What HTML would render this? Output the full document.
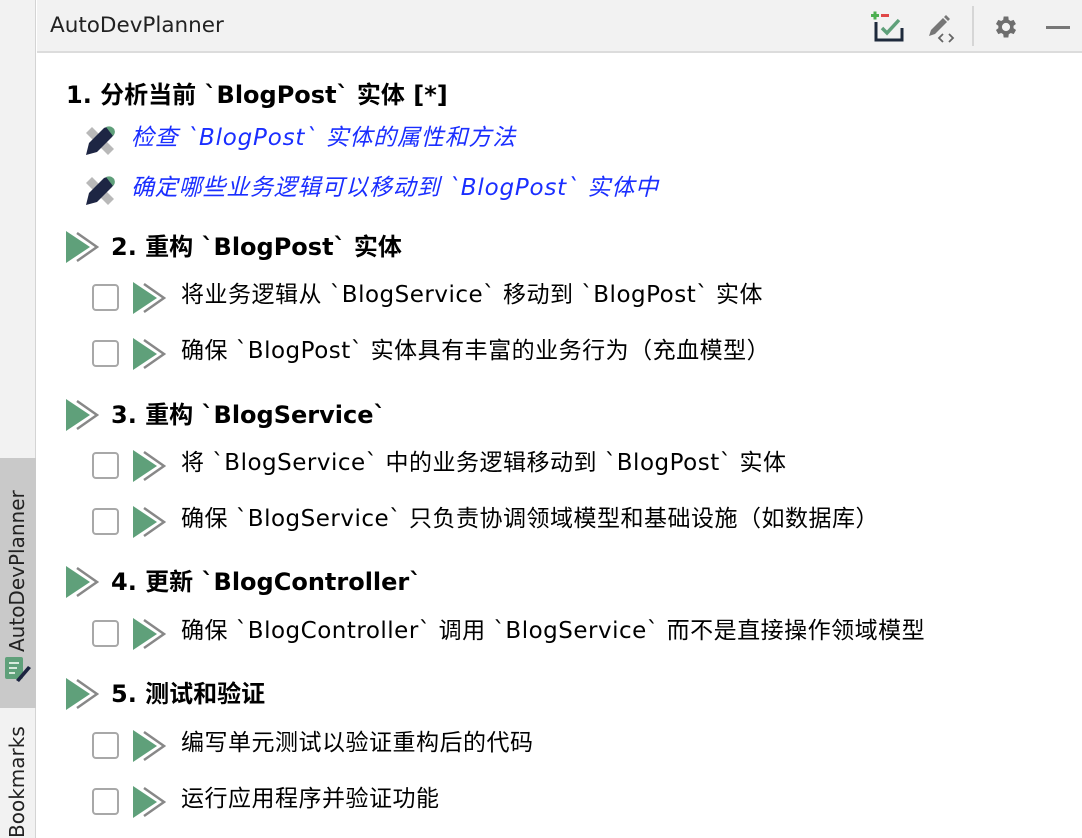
<!DOCTYPE html>
<html><head><meta charset="utf-8"><style>
*{margin:0;padding:0;box-sizing:border-box}
body{width:1082px;height:838px;overflow:hidden;background:#fff;font-family:"DejaVu Sans","Noto Sans CJK SC",sans-serif;position:relative;color:#000}
.side{position:absolute;left:0;top:0;width:36px;height:838px;background:#f2f2f2;border-right:1px solid #d4d4d4}
.tab{position:absolute;left:0;top:458px;width:36px;height:250px;background:#c9c9c9}
.vt{position:absolute;transform:rotate(-90deg);transform-origin:left top;font-size:20px;color:#222;white-space:nowrap}
.hdr{position:absolute;left:37px;top:0;right:0;height:53px;background:#f2f2f2;border-bottom:2px solid #dcdcdc}
.title{position:absolute;left:50px;top:13px;font-size:21.5px;color:#222}
.r{position:absolute;white-space:nowrap;line-height:30px}
.h{font-weight:bold;font-size:24px}
.it{font-size:23px;letter-spacing:0.5px}
.bl{font-style:italic;color:#1a2eff;font-size:23px;letter-spacing:0.8px}
.cb{position:absolute;width:27px;height:27px;border:2px solid #a8a8a8;border-radius:4px;background:#fff}
svg{position:absolute}
</style></head><body>
<div class="side"></div>
<div class="tab"></div>
<div class="vt" style="left:5px;top:652px">AutoDevPlanner</div>
<svg style="left:4px;top:656px" width="28" height="28" viewBox="0 0 28 28"><rect x="1" y="1" width="18" height="22" rx="2" fill="#5fa07a"/><rect x="5" y="6" width="10" height="2" fill="#d7eadc"/><rect x="5" y="11" width="8" height="2" fill="#d7eadc"/><rect x="5" y="16" width="6" height="2" fill="#d7eadc"/><path d="M12 24 L24 10 L27 12 L15 26 Z" fill="#1c2440"/></svg>
<div class="vt" style="left:5px;top:838px">Bookmarks</div>
<div class="hdr"></div>
<div class="title">AutoDevPlanner</div>
<svg style="left:869px;top:10px" width="36" height="34" viewBox="0 0 36 34"><rect x="2" y="4" width="8" height="3" fill="#4caf50"/><rect x="4.5" y="1.5" width="3" height="8" fill="#4caf50"/><rect x="12" y="4" width="8" height="3" fill="#e04848"/><path d="M7 12 V30 H33 V18" stroke="#1e2a3c" stroke-width="3" fill="none"/><path d="M13 18 L18 23 L30 10" stroke="#5fa07a" stroke-width="3.5" fill="none"/></svg>
<svg style="left:925px;top:12px" width="34" height="32" viewBox="0 0 34 32"><path d="M4 24 L6 18 L18 6 L22 10 L10 22 Z" fill="#777"/><path d="M19 5 L21 3 L25 7 L23 9Z" fill="#777"/><path d="M18 22 L14 26 L18 30 M24 22 L28 26 L24 30" stroke="#666" stroke-width="1.8" fill="none"/></svg>
<div style="position:absolute;left:972px;top:6px;width:2px;height:40px;background:#d6d6d6"></div>
<svg style="left:992px;top:13px" width="28" height="28" viewBox="0 0 24 24"><path fill="#6e6e6e" d="M19.4 13a7.5 7.5 0 000-2l2.1-1.6-2-3.5-2.5 1a7.4 7.4 0 00-1.7-1L15 3h-4l-.4 2.9a7.4 7.4 0 00-1.7 1l-2.5-1-2 3.5L6.5 11a7.5 7.5 0 000 2l-2.1 1.6 2 3.5 2.5-1a7.4 7.4 0 001.7 1L11 21h4l.4-2.9a7.4 7.4 0 001.7-1l2.5 1 2-3.5zM13 15.5a3.5 3.5 0 110-7 3.5 3.5 0 010 7z" transform="translate(-1 0)"/></svg>
<div style="position:absolute;left:1046px;top:26px;width:24px;height:3px;background:#777"></div>

<div class="r h" style="left:66px;top:80px">1. 分析当前 `BlogPost` 实体 [*]</div>

<svg style="left:84px;top:123px" width="34" height="34" viewBox="0 0 34 34"><path d="M2 10 L8 4 L30 26 L24 32 Z" fill="#b9b9b9"/><path d="M2 32 L5 20 L20 5 Q26 2 30 6 Q32 10 28 14 L13 29 Z" fill="#1e2644"/><path d="M22 4 Q27 2 30 6 Q32 10 29 13 Z" fill="#5fa07a"/></svg>
<div class="r bl" style="left:131px;top:123px">检查 `BlogPost` 实体的属性和方法</div>
<svg style="left:84px;top:173px" width="34" height="34" viewBox="0 0 34 34"><path d="M2 10 L8 4 L30 26 L24 32 Z" fill="#b9b9b9"/><path d="M2 32 L5 20 L20 5 Q26 2 30 6 Q32 10 28 14 L13 29 Z" fill="#1e2644"/><path d="M22 4 Q27 2 30 6 Q32 10 29 13 Z" fill="#5fa07a"/></svg>
<div class="r bl" style="left:131px;top:173px">确定哪些业务逻辑可以移动到 `BlogPost` 实体中</div>

<svg style="display:none"><defs><g id="ar"><path d="M11 2 L31 16 L11 30" stroke="#888" stroke-width="2.5" fill="none"/><path d="M0 0 L24 16 L0 32 Z" fill="#5fa07a"/></g></defs></svg>

<svg style="left:66px;top:231px" width="33" height="33"><use href="#ar"/></svg>
<div class="r h" style="left:111px;top:232px">2. 重构 `BlogPost` 实体</div>
<div class="cb" style="left:92px;top:284px"></div><svg style="left:133px;top:282px" width="33" height="33"><use href="#ar"/></svg>
<div class="r it" style="left:181px;top:280px">将业务逻辑从 `BlogService` 移动到 `BlogPost` 实体</div>
<div class="cb" style="left:92px;top:340px"></div><svg style="left:133px;top:338px" width="33" height="33"><use href="#ar"/></svg>
<div class="r it" style="left:181px;top:336px">确保 `BlogPost` 实体具有丰富的业务行为（充血模型）</div>

<svg style="left:66px;top:399px" width="33" height="33"><use href="#ar"/></svg>
<div class="r h" style="left:111px;top:400px">3. 重构 `BlogService`</div>
<div class="cb" style="left:92px;top:452px"></div><svg style="left:133px;top:450px" width="33" height="33"><use href="#ar"/></svg>
<div class="r it" style="left:181px;top:448px">将 `BlogService` 中的业务逻辑移动到 `BlogPost` 实体</div>
<div class="cb" style="left:92px;top:508px"></div><svg style="left:133px;top:506px" width="33" height="33"><use href="#ar"/></svg>
<div class="r it" style="left:181px;top:504px">确保 `BlogService` 只负责协调领域模型和基础设施（如数据库）</div>

<svg style="left:66px;top:566px" width="33" height="33"><use href="#ar"/></svg>
<div class="r h" style="left:111px;top:567px">4. 更新 `BlogController`</div>
<div class="cb" style="left:92px;top:620px"></div><svg style="left:133px;top:618px" width="33" height="33"><use href="#ar"/></svg>
<div class="r it" style="left:181px;top:616px">确保 `BlogController` 调用 `BlogService` 而不是直接操作领域模型</div>

<svg style="left:66px;top:678px" width="33" height="33"><use href="#ar"/></svg>
<div class="r h" style="left:111px;top:679px">5. 测试和验证</div>
<div class="cb" style="left:92px;top:732px"></div><svg style="left:133px;top:730px" width="33" height="33"><use href="#ar"/></svg>
<div class="r it" style="left:181px;top:728px">编写单元测试以验证重构后的代码</div>
<div class="cb" style="left:92px;top:788px"></div><svg style="left:133px;top:786px" width="33" height="33"><use href="#ar"/></svg>
<div class="r it" style="left:181px;top:784px">运行应用程序并验证功能</div>
</body></html>
